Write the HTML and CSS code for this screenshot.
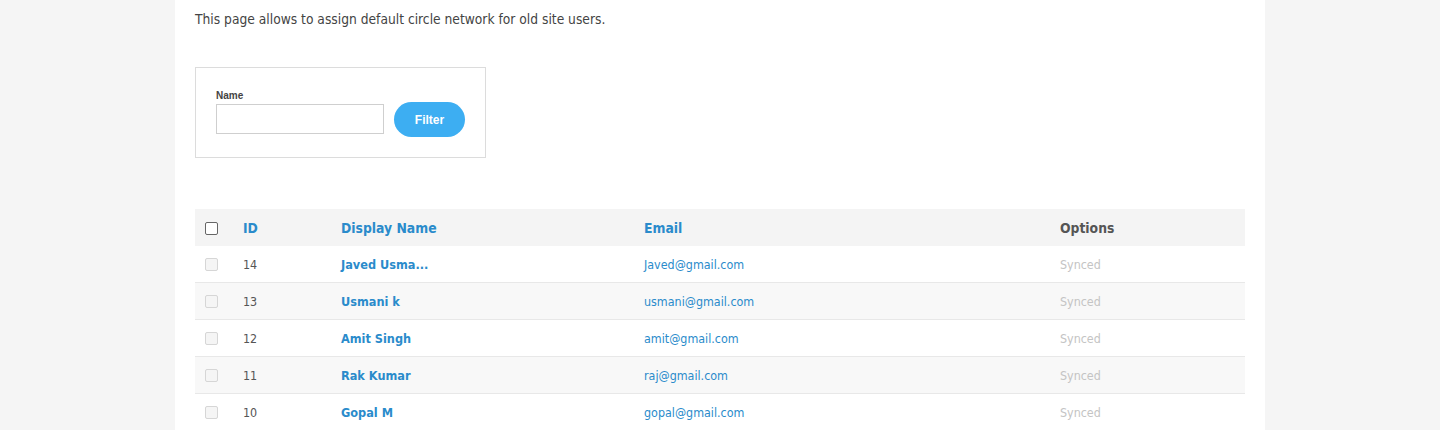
FILE: index.html
```html
<!DOCTYPE html>
<html>
<head>
<meta charset="utf-8">
<link rel="stylesheet" href="styles.css">
</head>
<body>
<div class="panel">
  <p class="intro">This page allows to assign default circle network for old site users.</p>
  <div class="filter-box">
    <div class="field">
      <label class="label">Name</label>
      <input class="input" type="text">
    </div>
    <button class="btn">Filter</button>
  </div>
  <table class="grid">
    <thead>
      <tr>
        <th class="c-chk"><span class="chk chk-head"></span></th>
        <th class="c-id link">ID</th>
        <th class="c-name link">Display Name</th>
        <th class="c-email link">Email</th>
        <th class="c-opt">Options</th>
      </tr>
    </thead>
    <tbody>
      <tr><td class="c-chk"><span class="chk"></span></td><td class="c-id">14</td><td class="c-name name">Javed Usma...</td><td class="c-email email">Javed@gmail.com</td><td class="c-opt synced">Synced</td></tr>
      <tr><td class="c-chk"><span class="chk"></span></td><td class="c-id">13</td><td class="c-name name">Usmani k</td><td class="c-email email">usmani@gmail.com</td><td class="c-opt synced">Synced</td></tr>
      <tr><td class="c-chk"><span class="chk"></span></td><td class="c-id">12</td><td class="c-name name">Amit Singh</td><td class="c-email email">amit@gmail.com</td><td class="c-opt synced">Synced</td></tr>
      <tr><td class="c-chk"><span class="chk"></span></td><td class="c-id">11</td><td class="c-name name">Rak Kumar</td><td class="c-email email">raj@gmail.com</td><td class="c-opt synced">Synced</td></tr>
      <tr><td class="c-chk"><span class="chk"></span></td><td class="c-id">10</td><td class="c-name name">Gopal M</td><td class="c-email email">gopal@gmail.com</td><td class="c-opt synced">Synced</td></tr>
    </tbody>
  </table>
</div>
</body>
</html>
```
FILE: styles.css
```css
html, body {
  margin: 0;
  padding: 0;
  background: #f5f5f5;
}
body {
  font-family: "DejaVu Sans Condensed", "DejaVu Sans", sans-serif;
  color: #444;
}
.panel {
  width: 1090px;
  margin-left: 175px;
  background: #fff;
  padding: 0 20px;
  box-sizing: border-box;
  min-height: 430px;
  overflow: hidden;
}
.intro {
  margin: 10px 0 0;
  font-size: 13.7px;
  line-height: 18px;
  color: #444;
}
.filter-box {
  margin-top: 39px;
  width: 291px;
  height: 91px;
  box-sizing: border-box;
  border: 1px solid #dcdcdc;
  padding: 21px 0 0 20px;
  display: flex;
  align-items: flex-start;
  gap: 10px;
}
.field {
  display: flex;
  flex-direction: column;
}
.label {
  font-family: "Liberation Sans", Arial, sans-serif;
  font-weight: bold;
  font-size: 10px;
  line-height: 14px;
  color: #444;
  margin-bottom: 1px;
}
.input {
  width: 168px;
  height: 30px;
  box-sizing: border-box;
  border: 1px solid #cfcfcf;
  margin: 0;
  padding: 0 6px;
  outline: none;
}
.btn {
  margin-top: 13px;
  width: 71px;
  height: 35px;
  border: none;
  border-radius: 18px;
  background: #3daef2;
  color: #fff;
  font-family: "Liberation Sans", Arial, sans-serif;
  font-weight: bold;
  font-size: 12px;
  padding: 0;
}
.grid {
  margin-top: 51px;
  width: 1050px;
  border-collapse: collapse;
  table-layout: fixed;
  font-size: 12.4px;
}
.grid th {
  background: #f4f4f4;
  height: 37px;
  text-align: left;
  font-weight: bold;
  font-size: 13.8px;
  padding: 0;
  color: #555;
}
.grid th.link { color: #2a8bcb; }
.grid td {
  height: 36px;
  padding: 0;
  border-bottom: 1px solid #e8e8e8;
  color: #555;
}
.grid tbody tr:nth-child(even) td { background: #f8f8f8; }
.c-chk { width: 48px; padding-left: 10px !important; box-sizing: border-box; }
.c-id { width: 98px; }
.c-name { width: 303px; }
.c-email { width: 416px; }
.c-opt { width: auto; }
.chk {
  display: block;
  width: 11px;
  height: 11px;
  border: 1px solid #d6d6d6;
  border-radius: 2px;
  background: #f5f5f5;
  margin-top: 1px;
}
.chk-head {
  border-color: #666;
  background: #fff;
  margin-top: 2px;
}
.grid td.name { color: #2a8bcb; font-weight: bold; font-size: 12.6px; }
.grid td.email { color: #2a8bcb; }
.grid td.synced { color: #c4c4c4; }
```
